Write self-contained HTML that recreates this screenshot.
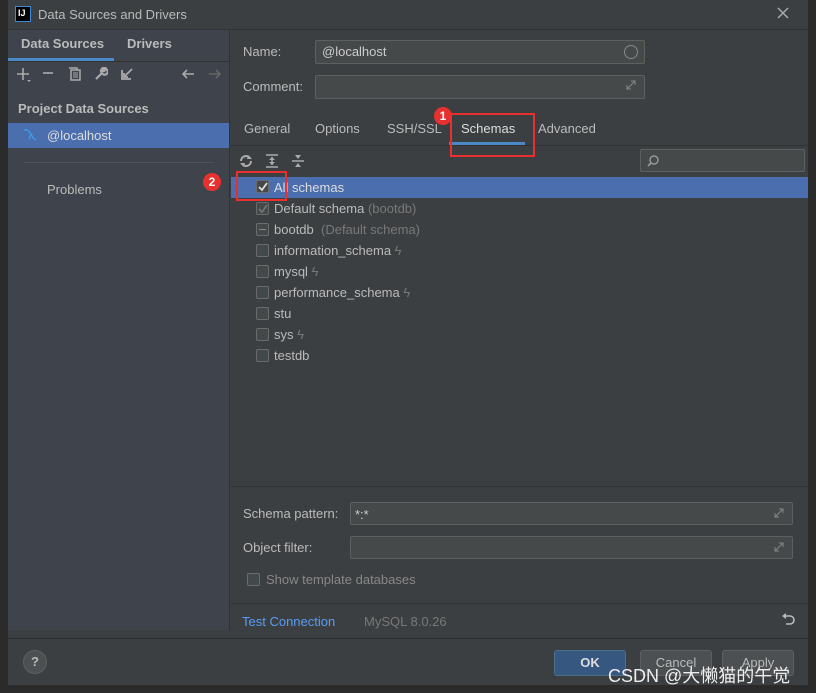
<!DOCTYPE html>
<html><head><style>
*{margin:0;padding:0;box-sizing:border-box}
body{width:816px;height:693px;background:#2b2b2b;font-family:"Liberation Sans","Noto Sans CJK SC",sans-serif;font-size:13px;color:#bbbbbb;position:relative;overflow:hidden}
.a{position:absolute}
.cb{position:absolute;width:13px;height:13px;border:1px solid #6b6b6b;background:#43494a;border-radius:2px}
.t{position:absolute;font-size:13px;color:#bbb}
.g{color:#787878}
.fld{position:absolute;background:#45494a;border:1px solid #5e6060;border-radius:2px}
.btn{position:absolute;height:26px;border:1px solid #5e6060;background:#4c5052;border-radius:3px;color:#bbb;text-align:center;line-height:24px;font-size:13px}
.red{position:absolute;border:2px solid #e8312f}
.badge{position:absolute;width:18px;height:18px;border-radius:50%;background:#e8312f;color:#fff;font-size:12px;text-align:center;line-height:18px;font-weight:bold}
svg{position:absolute}
</style></head><body>
<div class="a" style="left:8px;top:0;width:800px;height:685px;background:#3c3f41"></div>
<div class="a" style="left:15px;top:6px;width:16px;height:16px;background:#000;border:1px solid #3d8bd8;color:#fff;font-size:9px;font-weight:bold;line-height:12px;padding-left:2px">IJ</div>
<div class="t" style="left:38px;top:7px;color:#bbb">Data Sources and Drivers</div>
<svg style="left:777px;top:7px" width="12" height="12"><path d="M1 1L11 11M11 1L1 11" stroke="#aaa" stroke-width="1.5"/></svg>
<div class="a" style="left:8px;top:29px;width:800px;height:1px;background:#323232"></div>
<div class="a" style="left:8px;top:30px;width:222px;height:600px;background:#3e434c"></div>
<div class="t" style="left:21px;top:36px;font-weight:bold">Data Sources</div>
<div class="t" style="left:127px;top:36px;font-weight:bold">Drivers</div>
<div class="a" style="left:8px;top:58px;width:106px;height:3px;background:#4a88c7"></div>
<div class="a" style="left:8px;top:61px;width:222px;height:1px;background:#323232"></div>
<svg style="left:16px;top:67px" width="16" height="16"><path d="M7 1V13M1 7H13" stroke="#aaa" stroke-width="1.6"/><path d="M11 13h4l-2 2z" fill="#aaa"/></svg>
<svg style="left:42px;top:67px" width="12" height="12"><path d="M1 6H11" stroke="#aaa" stroke-width="1.6"/></svg>
<svg style="left:68px;top:67px" width="14" height="14"><path d="M1 1H9V3M3 3H12V13H3Z" stroke="#aaa" stroke-width="1.5" fill="none"/><path d="M5 6H10M5 8H10M5 10H10" stroke="#aaa"/></svg>
<svg style="left:94px;top:67px" width="14" height="14"><path d="M2 12L8 6M8 6A3 3 0 1 0 12 2L10 4 9 4 9 3 11 1A3 3 0 0 0 8 6" stroke="#aaa" stroke-width="2.2" fill="none"/></svg>
<svg style="left:120px;top:67px" width="14" height="14"><path d="M2 3V12H11M4 10L12 2" stroke="#aaa" stroke-width="1.8" fill="none"/><path d="M4 6V10H8" stroke="#aaa" stroke-width="1.8" fill="none"/></svg>
<svg style="left:181px;top:68px" width="14" height="12"><path d="M13 6H2M6 2L2 6 6 10" stroke="#aaa" stroke-width="1.6" fill="none"/></svg>
<svg style="left:208px;top:68px" width="14" height="12"><path d="M1 6H12M8 2L12 6 8 10" stroke="#666" stroke-width="1.6" fill="none"/></svg>
<div class="t" style="left:18px;top:101px;font-weight:bold">Project Data Sources</div>
<div class="a" style="left:8px;top:123px;width:222px;height:25px;background:#4b6eaf"></div>
<svg style="left:23px;top:128px" width="16" height="14"><path d="M1 2C5 1 8 5 10 10L13 12M8 6L6 11" stroke="#3d9be9" stroke-width="1.3" fill="none"/></svg>
<div class="t" style="left:47px;top:128px;color:#ddd">@localhost</div>
<div class="a" style="left:24px;top:162px;width:190px;height:1px;background:#4e535b"></div>
<div class="t" style="left:47px;top:182px">Problems</div>
<div class="a" style="left:229px;top:30px;width:1px;height:600px;background:#323232"></div>
<div class="t" style="left:243px;top:44px">Name:</div>
<div class="fld" style="left:315px;top:40px;width:330px;height:24px"></div>
<div class="t" style="left:322px;top:44px;color:#ccc">@localhost</div>
<div class="a" style="left:624px;top:45px;width:14px;height:14px;border:1px solid #888;border-radius:50%"></div>
<div class="t" style="left:243px;top:79px">Comment:</div>
<div class="fld" style="left:315px;top:75px;width:330px;height:24px"></div>
<svg style="left:626px;top:80px" width="10" height="10"><path d="M1 9L9 1M5 1H9V5M1 5V9H5" stroke="#888" fill="none"/></svg>
<div class="t" style="left:244px;top:121px">General</div>
<div class="t" style="left:315px;top:121px">Options</div>
<div class="t" style="left:387px;top:121px">SSH/SSL</div>
<div class="t" style="left:461px;top:121px;color:#ddd">Schemas</div>
<div class="t" style="left:538px;top:121px">Advanced</div>
<div class="a" style="left:449px;top:142px;width:76px;height:3px;background:#4a88c7"></div>
<div class="a" style="left:231px;top:145px;width:577px;height:1px;background:#323232"></div>
<div class="red" style="left:450px;top:113px;width:85px;height:44px"></div>
<div class="badge" style="left:434px;top:107px">1</div>
<svg style="left:239px;top:154px" width="14" height="14"><path d="M2 7A5 5 0 0 1 11 4M12 7A5 5 0 0 1 3 10" stroke="#aaa" stroke-width="2" fill="none"/><path d="M9 1L13 5 8 5z M5 13L1 9 6 9z" fill="#aaa"/></svg>
<svg style="left:265px;top:154px" width="14" height="14"><path d="M1 1H13M1 13H13M7 3V11" stroke="#aaa" stroke-width="1.5"/><path d="M4 6L7 3 10 6zM4 8L7 11 10 8z" fill="#aaa"/></svg>
<svg style="left:291px;top:154px" width="14" height="14"><path d="M1 7H13" stroke="#aaa" stroke-width="1.5"/><path d="M4 1L7 5 10 1zM4 13L7 9 10 13z" fill="#aaa"/></svg>
<div class="fld" style="left:640px;top:149px;width:165px;height:23px"></div>
<svg style="left:647px;top:154px" width="14" height="14"><circle cx="7" cy="6" r="4" stroke="#999" stroke-width="1.4" fill="none"/><path d="M4 9L1 12" stroke="#999" stroke-width="1.6"/></svg>
<div class="a" style="left:231px;top:177px;width:577px;height:21px;background:#4b6eaf"></div>
<div class="cb" style="left:256px;top:180px;background:#45494a"></div>
<svg style="left:258px;top:182px" width="10" height="10"><path d="M1 5L4 8 9 1" stroke="#ddd" stroke-width="1.8" fill="none"/></svg>
<div class="t" style="left:274px;top:180px;color:#ddd">All schemas</div>
<div class="red" style="left:236px;top:171px;width:51px;height:30px"></div>
<div class="badge" style="left:203px;top:173px">2</div>
<div class="cb" style="left:256px;top:202px"></div>
<svg style="left:258px;top:204px" width="10" height="10"><path d="M1 5L4 8 9 1" stroke="#777" stroke-width="1.6" fill="none"/></svg>
<div class="t" style="left:274px;top:201px">Default schema <span class="g">(bootdb)</span></div>
<div class="cb" style="left:256px;top:223px"><div style="margin:5px 2px;height:1px;background:#888"></div></div>
<div class="t" style="left:274px;top:222px">bootdb &nbsp;<span class="g">(Default schema)</span></div>
<div class="cb" style="left:256px;top:244px"></div><div class="t" style="left:274px;top:243px">information_schema <span class="g">ϟ</span></div>
<div class="cb" style="left:256px;top:265px"></div><div class="t" style="left:274px;top:264px">mysql <span class="g">ϟ</span></div>
<div class="cb" style="left:256px;top:286px"></div><div class="t" style="left:274px;top:285px">performance_schema <span class="g">ϟ</span></div>
<div class="cb" style="left:256px;top:307px"></div><div class="t" style="left:274px;top:306px">stu</div>
<div class="cb" style="left:256px;top:328px"></div><div class="t" style="left:274px;top:327px">sys <span class="g">ϟ</span></div>
<div class="cb" style="left:256px;top:349px"></div><div class="t" style="left:274px;top:348px">testdb</div>
<div class="a" style="left:231px;top:486px;width:577px;height:1px;background:#323232"></div>
<div class="t" style="left:243px;top:506px">Schema pattern:</div>
<div class="fld" style="left:350px;top:502px;width:443px;height:23px"></div>
<div class="t" style="left:355px;top:507px;color:#ccc">*:*</div>
<svg style="left:774px;top:508px" width="10" height="10"><path d="M1 9L9 1M5 1H9V5M1 5V9H5" stroke="#888" fill="none"/></svg>
<div class="t" style="left:243px;top:540px">Object filter:</div>
<div class="fld" style="left:350px;top:536px;width:443px;height:23px"></div>
<svg style="left:774px;top:542px" width="10" height="10"><path d="M1 9L9 1M5 1H9V5M1 5V9H5" stroke="#888" fill="none"/></svg>
<div class="cb" style="left:247px;top:573px"></div>
<div class="t" style="left:266px;top:572px;color:#888">Show template databases</div>
<div class="a" style="left:231px;top:603px;width:577px;height:1px;background:#323232"></div>
<div class="t" style="left:242px;top:614px;color:#589df6">Test Connection</div>
<div class="t" style="left:364px;top:614px;color:#787878">MySQL 8.0.26</div>
<svg style="left:781px;top:613px" width="14" height="14"><path d="M4 3H9A3 3 0 0 1 9 11H5" stroke="#bbb" stroke-width="1.6" fill="none"/><path d="M1 3L5 0V6z" fill="#bbb"/></svg>
<div class="a" style="left:8px;top:638px;width:800px;height:1px;background:#2b2b2b"></div>
<div class="a" style="left:23px;top:650px;width:24px;height:24px;border-radius:50%;background:#4c5052;border:1px solid #5e6060;text-align:center;line-height:22px;color:#bbb;font-weight:bold">?</div>
<div class="btn" style="left:554px;top:650px;width:72px;background:#365880;border-color:#4c708c;font-weight:bold;color:#ddd">OK</div>
<div class="btn" style="left:640px;top:650px;width:72px">Cancel</div>
<div class="btn" style="left:722px;top:650px;width:72px">Apply</div>
<div class="t" style="left:608px;top:662px;font-size:18px;color:#eee">CSDN @大懒猫的午觉</div>
</body></html>
